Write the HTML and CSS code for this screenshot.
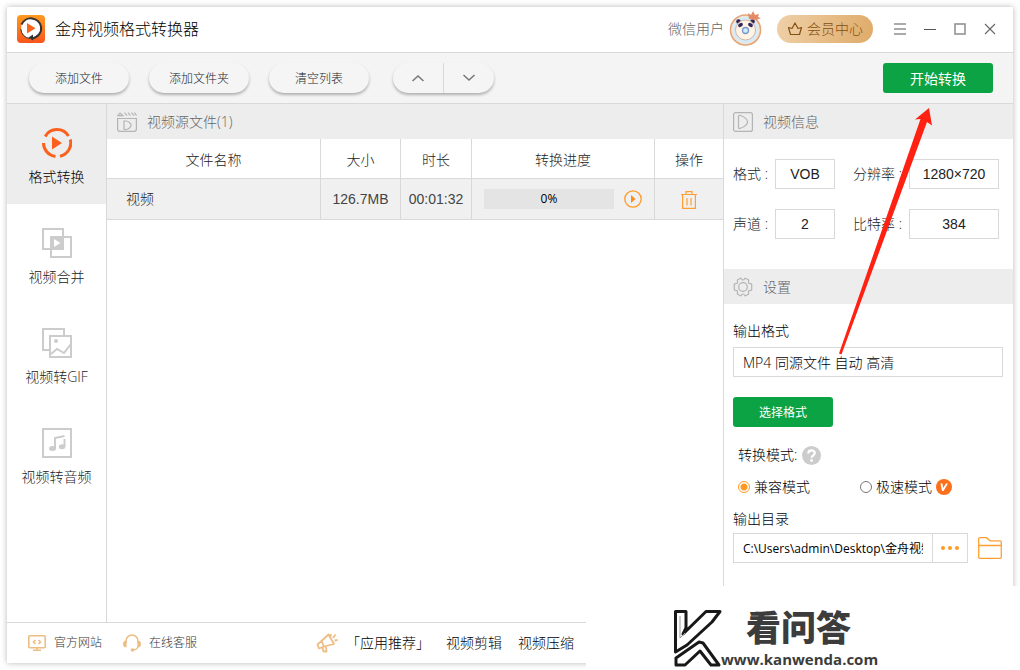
FILE: index.html
```
<!DOCTYPE html>
<html lang="zh-CN">
<head>
<meta charset="utf-8">
<title>金舟视频格式转换器</title>
<link rel="stylesheet" href="styles.css">
</head>
<body>
<div class="window">
  <header class="titlebar">
    <svg class="logo" width="28" height="28" viewBox="0 0 28 28" aria-hidden="true">
      <defs><linearGradient id="lg" x1="0" y1="0" x2="0" y2="1"><stop offset="0" stop-color="#ff9a1f"/><stop offset="1" stop-color="#f9551c"/></linearGradient></defs>
      <rect width="28" height="28" rx="4" fill="url(#lg)"/>
      <circle cx="14" cy="13.500" r="10" fill="#fff"/>
      <path d="M4.500 9.500a10.300 10.300 0 0 1 19.500 2c1 6-3 11-9.500 12.200" fill="none" stroke="#333" stroke-width="2"/>
      <path d="M3.800 14a10 10 0 0 0 9 9.500" fill="none" stroke="#333" stroke-width="1"/>
      <path d="M11.500 22.500l4.500-3v6z" fill="#333"/>
      <path d="M10 8v10.500l8.500-5.200z" fill="#f9641c"/>
    </svg>
    <h1 class="title">金舟视频格式转换器</h1>
    <span class="user">微信用户</span>
    <svg class="avatar" width="34" height="36" viewBox="0 0 34 36" role="img" aria-label="头像">
      <circle cx="16.500" cy="19" r="15" fill="#d3ebfb" stroke="#e5a576" stroke-width="1.600"/>
      <circle cx="16.500" cy="19" r="13.500" fill="none" stroke="#f8e5cf" stroke-width="1"/>
      <circle cx="9.500" cy="10.500" r="2.300" fill="#302253"/><circle cx="23.500" cy="10.500" r="2.300" fill="#302253"/>
      <circle cx="16.500" cy="19" r="10" fill="#fff4e6" stroke="#d5b6a4"/>
      <ellipse cx="11.500" cy="14" rx="2.600" ry="1.800" fill="#35285b" transform="rotate(-30 11.500 14)"/>
      <ellipse cx="21.500" cy="14" rx="2.600" ry="1.800" fill="#35285b" transform="rotate(30 21.500 14)"/>
      <circle cx="16.500" cy="19.500" r="3" fill="#d3ebfb" stroke="#7999cc" stroke-width="1.300"/>
      <path d="M20 8l-1-6 3 2 2-4 2 4 4-1-1 3 3 1-5 2z" fill="#e58b66"/>
    </svg>
    <button class="vip" type="button">
      <svg width="16" height="14" viewBox="0 0 16 14" fill="none" stroke="#835012" stroke-width="1.200" stroke-linejoin="round" aria-hidden="true"><path d="M3.500 12.500L1.500 5.500l3.500 1L8 1l3 5.500 3.500-1-2 7z"/></svg>
      会员中心
    </button>
    <div class="winctl">
      <button type="button" aria-label="菜单"><svg width="14" height="14" viewBox="0 0 14 14"><path d="M1 2h12M1 7h12M1 12h12" stroke="#aaa" stroke-width="2"/></svg></button>
      <button type="button" aria-label="最小化"><svg width="14" height="14" viewBox="0 0 14 14"><path d="M1 7.500h12" stroke="#555"/></svg></button>
      <button type="button" aria-label="最大化"><svg width="14" height="14" viewBox="0 0 14 14"><rect x="2" y="2" width="10" height="10" fill="none" stroke="#999" stroke-width="1.700"/></svg></button>
      <button type="button" aria-label="关闭"><svg width="14" height="14" viewBox="0 0 14 14"><path d="M2 2l10 10M12 2L2 12" stroke="#666" stroke-width="1.100"/></svg></button>
    </div>
  </header>

  <div class="toolbar">
    <button class="pill" type="button">添加文件</button>
    <button class="pill" type="button">添加文件夹</button>
    <button class="pill" type="button">清空列表</button>
    <div class="updown">
      <button type="button" aria-label="上移"><svg width="14" height="8" viewBox="0 0 14 8"><path d="M1.500 7L7 2l5.500 5" fill="none" stroke="#777" stroke-width="1.500"/></svg></button>
      <button type="button" aria-label="下移"><svg width="14" height="8" viewBox="0 0 14 8"><path d="M1.500 1L7 6l5.500-5" fill="none" stroke="#777" stroke-width="1.500"/></svg></button>
    </div>
    <button class="primary start" type="button">开始转换</button>
  </div>

  <div class="body">
    <nav class="side">
      <button class="nav active" type="button">
        <svg width="30" height="30" viewBox="0 0 30 30" aria-hidden="true"><g fill="none" stroke="#fb601d" stroke-width="3"><path d="M3.200 8.500A13.500 13.500 0 0 1 26.500 8"/><path d="M28.300 11.500A13.500 13.500 0 0 1 18 28.200"/><path d="M1.500 15A13.500 13.500 0 0 0 13.500 28.400"/></g><path d="M10 8.500v13l10-6.500z" fill="#fb601d"/></svg>
        <span>格式转换</span>
      </button>
      <button class="nav" type="button">
        <svg width="30" height="30" viewBox="0 0 30 30" aria-hidden="true"><g fill="none" stroke="#ccc" stroke-width="2"><rect x="1" y="1" width="20" height="20"/><rect x="9" y="9" width="20" height="20"/></g><path d="M8 8h14v14H8z" fill="#ccc"/><path d="M12 11v8l6.500-4z" fill="#fff"/></svg>
        <span>视频合并</span>
      </button>
      <button class="nav" type="button">
        <svg width="30" height="30" viewBox="0 0 30 30" aria-hidden="true"><g fill="none" stroke="#ccc" stroke-width="2"><path d="M8 22H1V1h21v7"/><rect x="8" y="8" width="21" height="21"/><path d="M9 26l6-5 7 4 6.500-8.500"/></g><circle cx="14" cy="13" r="2" fill="#ccc"/></svg>
        <span>视频转GIF</span>
      </button>
      <button class="nav" type="button">
        <svg width="30" height="30" viewBox="0 0 30 30" aria-hidden="true"><rect x="1" y="1" width="28" height="28" fill="none" stroke="#ccc" stroke-width="2"/><path d="M13 21v-11l9.500-2M22.500 11v8" fill="none" stroke="#ccc" stroke-width="2"/><ellipse cx="10.500" cy="20.500" rx="3.500" ry="2.500" fill="#ccc"/><ellipse cx="20" cy="18.700" rx="3.200" ry="2.500" fill="#ccc"/></svg>
        <span>视频转音频</span>
      </button>
    </nav>

    <main class="files">
      <h2 class="head">
        <svg width="20" height="20" viewBox="0 0 20 20" fill="none" stroke="#b4b4b4" stroke-width="1.200" aria-hidden="true"><path d="M.6 6.500h18.800V17a2.400 2.400 0 0 1-2.400 2.400H3A2.400 2.400 0 0 1 .6 17z"/><path d="M7 9h2c3 0 5 3 5 4.200 0 1.500-2 4.300-5 4.300H7z"/><path d="M.8 3.600L3 1l3 2.600zM7.500.6l2.500 3M11 .6l2.500 3M14.500.6l2.500 3M17.500.6l2 3" stroke-width="1.100"/></svg>
        视频源文件(1)
      </h2>
      <table class="list">
        <colgroup><col><col class="c-size"><col class="c-time"><col class="c-prog"><col class="c-op"></colgroup>
        <thead><tr><th>文件名称</th><th>大小</th><th>时长</th><th>转换进度</th><th>操作</th></tr></thead>
        <tbody><tr>
          <td class="name">视频</td><td>126.7MB</td><td>00:01:32</td>
          <td><div class="progress"><div class="bar" role="progressbar" aria-valuenow="0">0%</div>
            <button class="icon" type="button" aria-label="开始"><svg width="18" height="18" viewBox="0 0 18 18"><circle cx="9" cy="9" r="8.200" fill="none" stroke="#ff9a26" stroke-width="1.300"/><path d="M7 5v8l4.500-4z" fill="#ff8c1a"/></svg></button></div></td>
          <td><button class="icon" type="button" aria-label="删除"><svg width="18" height="18" viewBox="0 0 18 18" fill="none" stroke="#ff9f33" stroke-width="1.200"><path d="M1 3.500h16M6 3V.6h6V3M2.600 4v13.400h12.800V4M7 7v7.500M11 7v7.500"/></svg></button></td>
        </tr></tbody>
      </table>
    </main>

    <aside class="panel">
      <h2 class="head">
        <svg width="20" height="20" viewBox="0 0 20 20" fill="none" stroke="#b4b4b4" stroke-width="1.200" aria-hidden="true"><rect x=".6" y=".6" width="18.800" height="18.800" rx="2"/><path d="M5.500 4.500v11c0 1 .8 1.200 2 .7 4-1.400 7-4 7-6.200s-3-5-7-6.500c-1.200-.4-2 0-2 1z"/></svg>
        视频信息
      </h2>
      <div class="info">
        <label for="fmt">格式 :</label><input id="fmt" class="val" readonly value="VOB">
        <label for="res">分辨率 :</label><input id="res" class="val wide" readonly value="1280×720">
        <label for="ch">声道 :</label><input id="ch" class="val" readonly value="2">
        <label for="rate">比特率 :</label><input id="rate" class="val wide" readonly value="384">
      </div>
      <h2 class="head">
        <svg width="20" height="20" viewBox="0 0 20 20" fill="none" stroke="#b4b4b4" stroke-width="1.200" stroke-linejoin="round" aria-hidden="true"><path d="M7.200 1.500C8.500.2 8 3 10 3s1.500-2.800 2.800-1.500l2.700 1.300c.6.700-.6 2.200.2 3.300s2.600.1 3 1.200v5.400c-.4 1.100-2.200.1-3 1.200s.4 2.600-.2 3.300l-2.700 1.300C11.500 19.800 12 17 10 17s-1.500 2.800-2.800 1.500l-2.700-1.300c-.6-.7.6-2.200-.2-3.300s-2.600-.1-3-1.200V7.300c.4-1.100 2.200-.1 3-1.200s-.4-2.600.2-3.300z"/><circle cx="10" cy="10" r="4.300"/></svg>
        设置
      </h2>
      <form class="settings">
        <label class="row" for="out">输出格式</label>
        <input id="out" class="text" readonly value="MP4 同源文件 自动 高清">
        <button class="primary choose" type="button">选择格式</button>
        <div class="row mode">转换模式:
          <svg width="19" height="19" viewBox="0 0 19 19" role="img" aria-label="帮助"><circle cx="9.500" cy="9.500" r="9.500" fill="#ccc"/><path d="M6.300 7.400c0-4 6.500-3.800 6.500-.3 0 2.200-3.200 2.300-3.200 4.700" fill="none" stroke="#fff" stroke-width="2.200"/><circle cx="9.600" cy="14.500" r="1.400" fill="#fff"/></svg>
        </div>
        <div class="row radios">
          <label><input type="radio" name="mode" checked>兼容模式</label>
          <label><input type="radio" name="mode">极速模式
            <svg width="16" height="16" viewBox="0 0 16 16" aria-hidden="true"><circle cx="8" cy="8" r="8" fill="#fb701d"/><path d="M4.500 4.500h2l.5 4.500 3-4.500h2L7.500 12H6z" fill="#fff"/></svg></label>
        </div>
        <label class="row" for="dir">输出目录</label>
        <div class="path">
          <input id="dir" readonly value="C:\Users\admin\Desktop\金舟视频格式转换器">
          <button class="more" type="button" aria-label="浏览"><svg width="18" height="4" viewBox="0 0 18 4" fill="#ff9a26"><circle cx="2" cy="2" r="2"/><circle cx="9" cy="2" r="2"/><circle cx="16" cy="2" r="2"/></svg></button>
          <button class="icon" type="button" aria-label="打开文件夹"><svg width="24" height="22" viewBox="0 0 24 22" fill="none" stroke="#ff9f33" stroke-width="1.300"><path d="M.7 8.500V2A1.300 1.300 0 0 1 2 .7h6.500L12 3.800h10A1.300 1.300 0 0 1 23.300 5v15a1.300 1.300 0 0 1-1.300 1.300H2A1.300 1.300 0 0 1 .7 20V8.500H23.300"/></svg></button>
        </div>
      </form>
    </aside>
  </div>

  <footer class="foot">
    <a href="#site"><svg width="18" height="16" viewBox="0 0 18 16" fill="none" stroke="#edbd83" stroke-width="1.600" aria-hidden="true"><rect x=".8" y=".8" width="16.400" height="12" rx="1"/><path d="M5 15.200h8M9 13v2M7.500 5L5.500 7l2 2M10.500 5l2 2-2 2"/></svg>官方网站</a>
    <a href="#service"><svg width="18" height="18" viewBox="0 0 18 18" fill="none" stroke="#edbd83" stroke-width="1.600" aria-hidden="true"><path d="M3 9V7a6 6 0 0 1 12 0v2M15 12c0 2-2 4-5 4"/><path d="M2.800 7.500v5C.2 12.500.2 7.500 2.800 7.500zM15.200 7.500v5c2.600 0 2.600-5 0-5z" fill="#edbd83"/><circle cx="9.500" cy="16" r="1" fill="#edbd83"/></svg>在线客服</a>
    <div class="apps">
      <svg width="22" height="20" viewBox="0 0 22 20" fill="none" stroke="#edbd83" stroke-width="1.800" stroke-linejoin="round" aria-hidden="true"><path d="M5.500 8l7-6.500 5.500 9.500-10 2.500zM5.500 8l-4 3.500 1.500 4 5-2M6.500 14.500l1 4h3l-.5-4.500M14.500 1l.5 2.500M17 5l2.500-3.500M18.500 7.500l3-.5"/></svg>
      <span>「应用推荐」</span>
      <a href="#cut">视频剪辑</a>
      <a href="#zip">视频压缩</a>
    </div>
  </footer>
  <svg class="arrow" width="96" height="250" viewBox="0 0 96 250" aria-hidden="true"><path d="M92 1L78 12.500l5.500-.5L2 246.500l2.500 1L90 15l5 3.500z" fill="#ff2213"/></svg>
</div>

<div class="mark">
  <svg width="50" height="60" viewBox="0 0 50 60" fill="#fff" stroke="#181818" stroke-width="3" stroke-linejoin="round" aria-hidden="true"><path d="M3.500 36V3.500H14V20L11 26 34 3.500h14L40 14 15 37 3.500 44z"/><path d="M4 57v-7l23-16 4 1 16 22h-8L28 43 13 57z"/><path d="M8 8v22l5-5" fill="none" stroke="#999" stroke-width="1"/></svg>
  <div class="marktext"><strong>看问答</strong><span>www.kanwenda.com</span></div>
</div>
</body>
</html>
```
FILE: styles.css
```
* { box-sizing: border-box; }
body {
  margin: 0;
  padding: 7px;
  min-height: 100vh;
  display: flex;
  background: #fff;
  color: #222;
  font: 300 14px/20px "Open Sans", "Noto Sans CJK SC", sans-serif;
}
button, input { font: inherit; color: inherit; margin: 0; }
button { border: 0; padding: 0; background: none; cursor: pointer; }
a { color: inherit; text-decoration: none; }
svg { display: block; flex: none; }

.window {
  position: relative;
  flex: 1;
  min-width: 0;
  display: flex;
  flex-direction: column;
  background: #fff;
  box-shadow: 0 0 6px rgba(0, 0, 0, .28);
}

.titlebar {
  display: flex;
  align-items: center;
  height: 46px;
  padding: 0 8px 2px 10px;
  border-bottom: 1px solid #d9d9d9;
}
.title { margin: 0 auto 0 10px; font-size: 16px; font-weight: 300; color: #000; }
.user { color: #666; }
.avatar { margin: 0 14px 0 5px; }
.vip {
  display: flex;
  align-items: center;
  justify-content: center;
  gap: 4px;
  width: 96px;
  height: 28px;
  border-radius: 14px;
  background: linear-gradient(100deg, #efd0a8, #dfab69);
  color: #835012;
}
.winctl { display: flex; margin-left: 12px; }
.winctl button { width: 30px; height: 28px; display: grid; place-items: center; }

.toolbar {
  display: flex;
  align-items: center;
  gap: 20px;
  height: 51px;
  padding: 0 20px 0 22px;
  background: #f4f4f4;
  border-bottom: 1px solid #d9d9d9;
}
.pill, .updown {
  height: 30px;
  border-radius: 15px;
  background: #f5f5f5;
  box-shadow: 0 2px 3px rgba(0, 0, 0, .28);
}
.pill { width: 100px; padding-top: 2px; font-size: 12px; color: #222; }
.updown { display: flex; width: 101px; margin-left: 4px; }
.updown button { flex: 1; display: grid; place-items: center; }
.updown button + button { border-left: 1px solid #d9d9d9; }
.primary { height: 30px; padding-top: 2px; border-radius: 3px; background: #0ca344; color: #fff; font-weight: 400; }
.start { width: 110px; margin-left: auto; }

.body { flex: 1; display: flex; }
.side { width: 100px; border-right: 1px solid #d9d9d9; }
.nav {
  width: 100%;
  height: 100px;
  display: flex;
  flex-direction: column;
  align-items: center;
  gap: 9px;
  padding-top: 24px;
  justify-content: flex-start;
  color: #222;
}
.nav.active { background: #ededed; color: #000; }

.files { flex: 1; min-width: 0; }
.files .head { padding-left: 10px; }
.head {
  display: flex;
  align-items: center;
  gap: 10px;
  height: 35px;
  margin: 0;
  padding: 0 9px;
  background: #ededed;
  color: #666;
  font-size: 14px;
  font-weight: 300;
}

.list { width: 100%; border-collapse: separate; border-spacing: 0; table-layout: fixed; }
.list th, .list td {
  height: 40px;
  padding: 0;
  text-align: center;
  font-weight: 300;
  border-bottom: 1px solid #d9d9d9;
  border-right: 1px solid #d9d9d9;
}
.list th { padding-top: 2px; }
.list th:last-child, .list td:last-child { border-right: 0; }
.list td { height: 41px; background: #f0f0f0; font-family: "Liberation Sans", "Noto Sans CJK SC", sans-serif; color: #444; }
.list .name { text-align: left; padding-left: 19px; color: #222; }
.c-size { width: 80px; }
.c-time { width: 71px; }
.c-prog { width: 183px; }
.c-op { width: 68px; }
.progress { display: flex; align-items: center; gap: 10px; padding: 0 12px; }
.bar { flex: 1; background: #e4e4e4; color: #000; font: 400 12px/20px "Open Sans", sans-serif; }
.icon { display: inline-block; vertical-align: middle; }

.panel { width: 290px; border-left: 1px solid #d9d9d9; }
.info {
  display: grid;
  grid-template-columns: 42px 78px 56px 90px;
  row-gap: 20px;
  align-items: center;
  padding: 20px 9px 30px;
}
.info label { white-space: nowrap; }
.val {
  height: 30px;
  width: 60px;
  padding: 0;
  border: 1px solid #d9d9d9;
  background: #fff;
  text-align: center;
  font-family: "Liberation Sans", sans-serif;
}
.val.wide { width: 90px; }

.settings { display: flex; flex-direction: column; padding: 17px 10px 10px 9px; color: #000; }
.row { height: 20px; display: flex; align-items: center; }
.text { height: 30px; margin: 6px 0 20px; padding: 0 9px; border: 1px solid #d9d9d9; }
.choose { width: 100px; font-size: 12px; }
.mode { gap: 5px; margin: 18px 0 12px; padding-left: 5px; }
.radios { padding-left: 5px; margin-bottom: 12px; }
.radios label { display: flex; align-items: center; gap: 4px; width: 122px; white-space: nowrap; }
.radios input {
  appearance: none;
  flex: none;
  width: 12px;
  height: 12px;
  border: 1px solid #777;
  border-radius: 50%;
  background: #fff;
}
.radios input:checked { border-color: #ff9a26; background: radial-gradient(circle, #ff9a26 3px, #fff 4px); }
.path { display: flex; align-items: center; margin-top: 4px; padding-right: 1px; }
.path input { flex: 1; min-width: 0; height: 30px; padding: 0 9px; border: 1px solid #d9d9d9; font-size: 12px; font-weight: 400; }
.more { width: 35px; height: 30px; display: grid; place-items: center; border: 1px solid #d9d9d9; border-left: 0; }
.path .icon { margin-left: 10px; }

.foot {
  display: flex;
  align-items: center;
  gap: 21px;
  height: 41px;
  padding: 0 21px;
  border-top: 1px solid #d9d9d9;
  font-size: 12px;
  color: #333;
}
.foot > a { display: flex; align-items: center; gap: 8px; }
.apps { display: flex; align-items: center; gap: 16px; margin-left: 98px; font-size: 14px; color: #000; }
.apps span { margin-left: -8px; }

.arrow { position: absolute; top: 100px; right: 80px; pointer-events: none; }

.mark {
  position: absolute;
  right: 0;
  bottom: 0;
  width: 434px;
  height: 84px;
  display: flex;
  align-items: flex-end;
  padding: 0 0 2px 86px;
  background: #fff;
  color: #3c3c3c;
}
.marktext { display: flex; flex-direction: column; font-weight: 700; }
.marktext strong { padding-left: 24px; font-size: 35px; line-height: 40px; font-weight: 900; margin-bottom: 2px; }
.marktext span { font: 700 15px/18px "Open Sans", sans-serif; margin-left: -1px; }
```
